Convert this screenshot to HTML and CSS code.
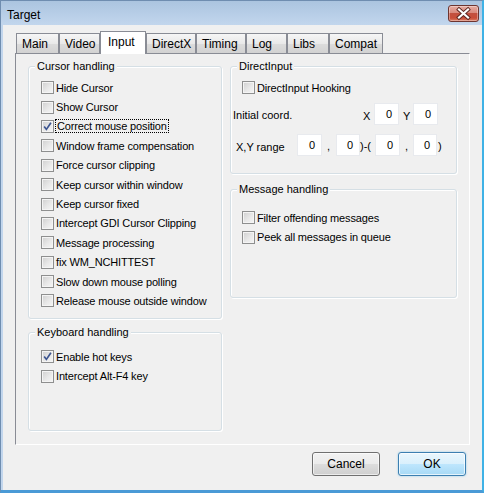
FILE: index.html
```html
<!DOCTYPE html>
<html>
<head>
<meta charset="utf-8">
<title>Target</title>
<link rel="stylesheet" href="styles.css">
</head>
<body>
<div class="window">
  <div class="titlebar">
    <span class="title">Target</span>
    <div class="close">
      <svg width="29" height="15" viewBox="0 0 29 15">
        <path d="M10 3.5 L19 11.5 M19 3.5 L10 11.5" stroke="#5a2520" stroke-width="4" stroke-linecap="square" fill="none"/>
        <path d="M10 3.5 L19 11.5 M19 3.5 L10 11.5" stroke="#ffffff" stroke-width="2.2" stroke-linecap="square" fill="none"/>
      </svg>
    </div>
  </div>
  <div class="client">
    <div class="tabs">
      <div class="tab t-main">Main</div>
      <div class="tab t-video">Video</div>
      <div class="tab t-input selected">Input</div>
      <div class="tab t-dx">DirectX</div>
      <div class="tab t-timing">Timing</div>
      <div class="tab t-log">Log</div>
      <div class="tab t-libs">Libs</div>
      <div class="tab t-compat">Compat</div>
    </div>
    <div class="panel">
      <div class="col col-left">
        <fieldset class="group g-cursor">
          <legend>Cursor handling</legend>
          <div class="cb"><span class="box"></span><span>Hide Cursor</span></div>
          <div class="cb"><span class="box"></span><span>Show Cursor</span></div>
          <div class="cb"><span class="box checked"><svg width="11" height="11" viewBox="0 0 11 11"><path d="M2.2 5.4 L4.4 8.4 L8.9 1.8" stroke="#3d5590" stroke-width="1.7" fill="none"/></svg></span><span class="focus">Correct mouse position</span></div>
          <div class="cb"><span class="box"></span><span>Window frame compensation</span></div>
          <div class="cb"><span class="box"></span><span>Force cursor clipping</span></div>
          <div class="cb"><span class="box"></span><span>Keep cursor within window</span></div>
          <div class="cb"><span class="box"></span><span>Keep cursor fixed</span></div>
          <div class="cb"><span class="box"></span><span>Intercept GDI Cursor Clipping</span></div>
          <div class="cb"><span class="box"></span><span>Message processing</span></div>
          <div class="cb"><span class="box"></span><span>fix WM_NCHITTEST</span></div>
          <div class="cb"><span class="box"></span><span>Slow down mouse polling</span></div>
          <div class="cb"><span class="box"></span><span>Release mouse outside window</span></div>
        </fieldset>
        <fieldset class="group g-keyboard">
          <legend>Keyboard handling</legend>
          <div class="cb"><span class="box checked"><svg width="11" height="11" viewBox="0 0 11 11"><path d="M2.2 5.4 L4.4 8.4 L8.9 1.8" stroke="#3d5590" stroke-width="1.7" fill="none"/></svg></span><span>Enable hot keys</span></div>
          <div class="cb"><span class="box"></span><span>Intercept Alt-F4 key</span></div>
        </fieldset>
      </div>
      <div class="col col-right">
        <fieldset class="group g-dinput">
          <legend>DirectInput</legend>
          <div class="cb"><span class="box"></span><span>DirectInput Hooking</span></div>
          <div class="row row-coord">
            <span class="lbl lbl-coord">Initial coord.</span>
            <span class="sep sep-x">X</span>
            <span class="num">0</span>
            <span class="sep sep-y">Y</span>
            <span class="num">0</span>
          </div>
          <div class="row row-range">
            <span class="lbl lbl-range">X,Y range</span>
            <span class="num">0</span>
            <span class="sep sep-comma">,</span>
            <span class="num narrow">0</span>
            <span class="sep sep-mid">)-(</span>
            <span class="num">0</span>
            <span class="sep sep-comma2">,</span>
            <span class="num narrow">0</span>
            <span class="sep sep-end">)</span>
          </div>
        </fieldset>
        <fieldset class="group g-msg">
          <legend>Message handling</legend>
          <div class="cb"><span class="box"></span><span>Filter offending messages</span></div>
          <div class="cb"><span class="box"></span><span>Peek all messages in queue</span></div>
        </fieldset>
      </div>
    </div>
    <div class="buttons">
      <div class="btn">Cancel</div>
      <div class="btn ok">OK</div>
    </div>
  </div>
</div>
</body>
</html>
```
FILE: styles.css
```css
html, body {
  margin: 0;
  padding: 0;
  background: #f0f0f0;
}
body {
  font-family: "Liberation Sans", Arial, sans-serif;
  color: #000;
}
.window {
  width: 484px;
  height: 493px;
  box-sizing: border-box;
  border-left: 1px solid #6f8db0;
  border-top: 1px solid #6f8db0;
  border-right: 2px solid #3fb2e6;
  border-bottom: 3px solid #4a9ad6;
  padding-left: 2px;
  background: #c2d6ed;
  display: flex;
  flex-direction: column;
}
.titlebar {
  height: 24px;
  margin-left: -2px;
  padding-left: 6px;
  display: flex;
  justify-content: space-between;
  align-items: flex-start;
  background: linear-gradient(#abc4df, #b9cfe8 60%, #c2d6ed);
}
.title {
  font-size: 12px;
  line-height: 14px;
  padding-top: 7px;
}
.close {
  width: 31px;
  height: 17px;
  box-sizing: border-box;
  margin-top: 4px;
  margin-right: 3px;
  border: 1px solid #6e3530;
  border-radius: 3px;
  background: linear-gradient(#e6aca2 0%, #d98a7d 45%, #c2503f 50%, #c84d38 80%, #dc7f66 100%);
  box-shadow: inset 0 0 0 1px rgba(255, 255, 255, 0.35);
  display: flex;
}
.client {
  flex: 1;
  background: #f0f0f0;
  display: flex;
  flex-direction: column;
}
.tabs {
  height: 28px;
  box-sizing: border-box;
  padding-left: 13px;
  display: flex;
  align-items: flex-end;
}
.tab {
  height: 20px;
  box-sizing: border-box;
  border: 1px solid #898c95;
  border-bottom: none;
  padding-left: 5px;
  font-size: 12px;
  line-height: 20px;
  white-space: nowrap;
  background: linear-gradient(#f6f6f6, #e9e9e9 50%, #dcdcdc 51%, #d2d2d2);
}
.tab.selected {
  height: 23px;
  margin-bottom: -1px;
  position: relative;
  z-index: 1;
  background: #ffffff;
  padding-left: 7px;
  line-height: 20px;
}
.t-main { width: 43px; }
.t-video { width: 41px; }
.t-input { width: 46px; }
.t-dx { width: 50px; }
.t-timing { width: 50px; }
.t-log { width: 41px; }
.t-libs { width: 42px; }
.t-compat { width: 54px; }

.panel {
  margin: 0 12px;
  height: 392px;
  box-sizing: border-box;
  border: 1px solid #898c95;
  border-right-color: #ffffff;
  border-bottom-color: #ffffff;
  padding: 6px 11px 0 12px;
  display: flex;
  gap: 8px;
}
.col {
  display: flex;
  flex-direction: column;
}
.col-left { width: 194px; }
.col-right { width: 227px; }

.group {
  margin: 0;
  box-sizing: border-box;
  border: 1px solid #d5dfe5;
  border-radius: 3px;
  box-shadow: 1px 1px 0 #ffffff, inset 1px 1px 0 #ffffff;
  padding: 6px 6px 0 6px;
  min-width: 0;
}
.group legend {
  font-size: 11px;
  line-height: 13px;
  padding: 0 2px;
  background: #f0f0f0;
}
.g-cursor { height: 259px; padding-top: 5px; }
.g-keyboard { height: 105px; margin-top: 7px; padding-top: 8px; }
.g-dinput { height: 114px; padding-top: 5px; }
.g-msg { height: 115px; margin-top: 9px; padding-top: 12px; }

.cb {
  height: 19.4px;
  display: flex;
  align-items: center;
  gap: 2px;
  font-size: 11px;
  letter-spacing: -0.15px;
  margin-left: 6px;
  white-space: nowrap;
}
.g-dinput .cb, .g-msg .cb { margin-left: 5px; }
.box {
  width: 13px;
  height: 13px;
  flex: none;
  box-sizing: border-box;
  border: 1px solid #8e8f8f;
  background: linear-gradient(135deg, #cfcfcf, #e8e8e8 55%, #f6f6f6);
  box-shadow: inset 0 0 0 1px #f4f4f4;
  display: flex;
}
.box.checked svg { display: block; }
.focus {
  border: 1px dotted #000;
  padding: 0 1px;
  line-height: 12px;
  margin-left: -1px;
}

.row {
  display: flex;
  align-items: center;
  height: 22px;
  font-size: 11px;
  white-space: nowrap;
}
.row-coord { margin-top: 6px; }
.row-range { margin-top: 9px; }
.lbl { flex: none; }
.lbl-coord { width: 130px; margin-left: -4px; padding-top: 1px; }
.lbl-range { width: 61px; margin-left: -1px; padding-top: 4px; }
.sep { flex: none; box-sizing: border-box; }
.sep-x { width: 11px; padding-top: 3px; }
.sep-y { width: 14px; padding-left: 4px; padding-top: 3px; }
.num {
  width: 25px;
  height: 22px;
  flex: none;
  box-sizing: border-box;
  background: #ffffff;
  border: 1px solid #e8eaee;
  text-align: right;
  padding-right: 6px;
  line-height: 20px;
}
.num.narrow { width: 24px; }
.sep-comma { width: 14px; padding-left: 5px; padding-top: 2px; }
.sep-mid { width: 15px; padding-left: 0; padding-top: 2px; }
.sep-comma2 { width: 13px; padding-left: 5px; padding-top: 2px; }
.sep-end { padding-left: 1px; padding-top: 2px; }

.buttons {
  display: flex;
  justify-content: flex-end;
  gap: 18px;
  margin-top: 7px;
  padding-right: 16px;
}
.btn {
  width: 68px;
  height: 24px;
  box-sizing: border-box;
  border: 1px solid #707070;
  border-radius: 3px;
  background: linear-gradient(#f2f2f2, #ebebeb 50%, #dddddd 51%, #cfcfcf);
  box-shadow: inset 0 0 0 1px rgba(255, 255, 255, 0.6);
  font-size: 12px;
  line-height: 22px;
  text-align: center;
}
.btn.ok {
  border-color: #3c7fb1;
  background: linear-gradient(#eaf6fd, #d9f0fc 50%, #bee6fd 51%, #a7d9f5);
  box-shadow: inset 0 0 0 1px rgba(255, 255, 255, 0.7), 0 0 2px rgba(60, 170, 230, 0.6);
}
```
